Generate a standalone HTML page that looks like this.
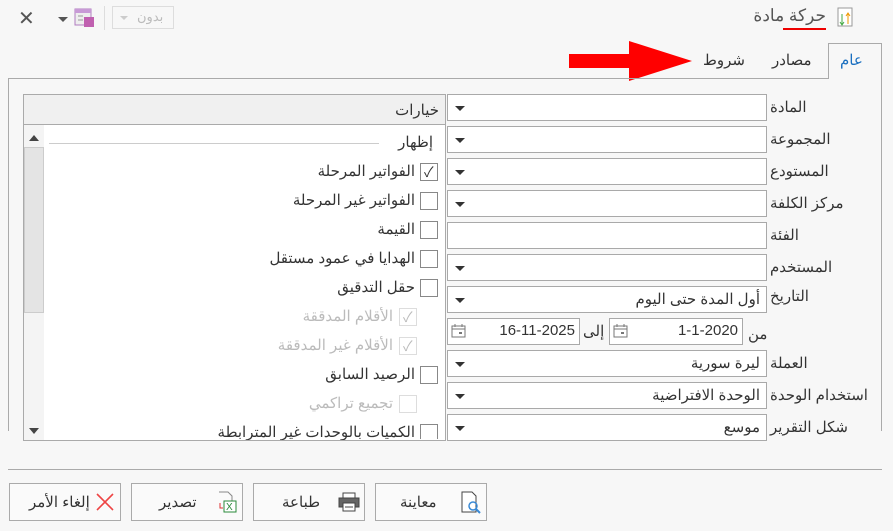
<!DOCTYPE html>
<html><head><meta charset="utf-8"><style>
*{box-sizing:border-box;margin:0;padding:0}
body{width:893px;height:531px;background:#f7f7f7;font-family:"Liberation Sans","Noto Sans CJK SC",sans-serif;font-size:14px;color:#333;position:relative;overflow:hidden}
.a{position:absolute}
.inp{position:absolute;left:447px;width:320px;height:27px;background:#fff;border:1px solid #a9a9a9}
.inp .dd{position:absolute;left:7px;top:11px;width:0;height:0;border-left:5px solid transparent;border-right:5px solid transparent;border-top:5px solid #333}
.inp .v{position:absolute;right:6px;top:3px;font-size:15px;color:#333}
.lbl{position:absolute;left:770px;font-size:15px;color:#333;direction:rtl}
.cb{position:absolute;width:18px;height:18px;border:1px solid #888;background:#fff}
.cb.d{border-color:#ddd}
.ct{position:absolute;direction:rtl;font-size:15px;white-space:nowrap}
.btn{position:absolute;top:483px;width:112px;height:38px;border:1px solid #aaa;background:#fafafa}
.btn span{position:absolute;top:9px;font-size:15px}
</style></head><body>
<!-- top bar -->
<div class="a" style="left:18px;top:6px;font-size:20px;color:#555">✕</div>
<div class="a" style="left:58px;top:17px;border-left:5px solid transparent;border-right:5px solid transparent;border-top:5px solid #555"></div>
<svg class="a" style="left:74px;top:8px" width="22" height="20"><rect x="1" y="1" width="16" height="16" fill="#eee" stroke="#b07cc0"/><rect x="1" y="1" width="16" height="4" fill="#c89ad6"/><rect x="10" y="9" width="10" height="10" fill="#c060b0"/><line x1="4" y1="8" x2="9" y2="8" stroke="#999"/><line x1="4" y1="12" x2="9" y2="12" stroke="#999"/></svg>
<div class="a" style="left:104px;top:6px;width:1px;height:24px;background:#ddd"></div>
<div class="a" style="left:112px;top:6px;width:62px;height:23px;border:1px solid #ddd;background:#f7f7f7"></div>
<div class="a" style="left:120px;top:16px;border-left:4px solid transparent;border-right:4px solid transparent;border-top:4px solid #ccc"></div>
<div class="a" style="left:137px;top:9px;color:#bbb;font-size:13px">بدون</div>
<div class="a" style="right:67px;top:6px;font-size:17px;color:#555;direction:rtl">حركة مادة</div>
<div class="a" style="left:783px;top:28px;width:43px;height:2px;background:#e00"></div>
<svg class="a" style="left:836px;top:6px" width="20" height="24"><rect x="2" y="2" width="14" height="18" fill="#fff" stroke="#999"/><path d="M6 8v10M4 16l2 3 2-3" stroke="#4a4" fill="none"/><path d="M12 18V8M10 10l2-3 2 3" stroke="#e90" fill="none"/></svg>
<!-- tabs -->
<div class="a" style="left:828px;top:43px;width:54px;height:36px;border:1px solid #aaa;border-bottom:none;background:#f7f7f7;z-index:2"></div>
<div class="a" style="left:840px;top:51px;color:#1a6fc0;font-size:15px;z-index:3">عام</div>
<div class="a" style="left:772px;top:51px;font-size:15px">مصادر</div>
<div class="a" style="left:703px;top:51px;font-size:15px">شروط</div>
<svg class="a" style="left:568px;top:40px" width="125" height="42"><path d="M1 14h60V1l63 20-63 20V28H1z" fill="#f00"/></svg>
<!-- panel -->
<div class="a" style="left:8px;top:78px;width:874px;height:353px;border:1px solid #aaa;border-bottom:none"></div>
<!-- fields -->
<div class="inp" style="top:94px"><i class="dd"></i></div><div class="lbl" style="top:98px">المادة</div>
<div class="inp" style="top:126px"><i class="dd"></i></div><div class="lbl" style="top:130px">المجموعة</div>
<div class="inp" style="top:158px"><i class="dd"></i></div><div class="lbl" style="top:162px">المستودع</div>
<div class="inp" style="top:190px"><i class="dd"></i></div><div class="lbl" style="top:194px">مركز الكلفة</div>
<div class="inp" style="top:222px"></div><div class="lbl" style="top:226px">الفئة</div>
<div class="inp" style="top:254px"><i class="dd"></i></div><div class="lbl" style="top:258px">المستخدم</div>
<div class="inp" style="top:286px"><i class="dd"></i><span class="v">أول المدة حتى اليوم</span></div><div class="lbl" style="top:287px">التاريخ</div>
<div class="inp" style="top:318px;left:609px;width:134px"><span class="v" style="right:4px">1-1-2020</span><svg class="a" style="left:3px;top:4px" width="16" height="16"><rect x="1" y="3" width="13" height="11" fill="none" stroke="#777"/><line x1="1" y1="6" x2="14" y2="6" stroke="#777"/><line x1="4" y1="1" x2="4" y2="4" stroke="#777"/><line x1="11" y1="1" x2="11" y2="4" stroke="#777"/><rect x="8" y="9" width="3" height="2" fill="#777"/></svg></div>
<div class="lbl" style="left:748px;top:325px">من</div>
<div class="a" style="left:583px;top:322px;font-size:15px">إلى</div>
<div class="inp" style="top:318px;width:133px"><span class="v" style="right:4px">16-11-2025</span><svg class="a" style="left:3px;top:4px" width="16" height="16"><rect x="1" y="3" width="13" height="11" fill="none" stroke="#777"/><line x1="1" y1="6" x2="14" y2="6" stroke="#777"/><line x1="4" y1="1" x2="4" y2="4" stroke="#777"/><line x1="11" y1="1" x2="11" y2="4" stroke="#777"/><rect x="8" y="9" width="3" height="2" fill="#777"/></svg></div>
<div class="inp" style="top:350px"><i class="dd"></i><span class="v">ليرة سورية</span></div><div class="lbl" style="top:354px">العملة</div>
<div class="inp" style="top:382px"><i class="dd"></i><span class="v">الوحدة الافتراضية</span></div><div class="lbl" style="top:386px">استخدام الوحدة</div>
<div class="inp" style="top:414px"><i class="dd"></i><span class="v">موسع</span></div><div class="lbl" style="top:418px">شكل التقرير</div>
<!-- options -->
<div class="a" style="left:23px;top:94px;width:423px;height:347px;border:1px solid #aaa;background:#fff;overflow:hidden">
<div class="a" style="left:0;top:0;width:421px;height:30px;background:#f0f0f0;border-bottom:1px solid #aaa"></div>
<div class="a" style="right:6px;top:6px;font-size:15px">خيارات</div>
<div class="a" style="left:0;top:30px;width:20px;height:317px;background:#f4f4f4"></div>
<div class="a" style="left:5px;top:40px;border-left:5px solid transparent;border-right:5px solid transparent;border-bottom:6px solid #444"></div>
<div class="a" style="left:0;top:52px;width:20px;height:166px;background:#e4e4e4;border:1px solid #ccc"></div>
<div class="a" style="left:5px;top:333px;border-left:5px solid transparent;border-right:5px solid transparent;border-top:6px solid #444"></div>
<div class="a" style="left:25px;top:48px;width:330px;height:1px;background:#ccc"></div>
<div class="a" style="right:12px;top:38px;font-size:15px">إظهار</div>
</div>
<div class="cb" style="left:420px;top:163px"></div><div class="a" style="left:424px;top:162px;font-size:14px">✓</div><div class="ct" style="right:478px;top:162px">الفواتير المرحلة</div>
<div class="cb" style="left:420px;top:192px"></div><div class="ct" style="right:478px;top:191px">الفواتير غير المرحلة</div>
<div class="cb" style="left:420px;top:221px"></div><div class="ct" style="right:478px;top:220px">القيمة</div>
<div class="cb" style="left:420px;top:250px"></div><div class="ct" style="right:478px;top:249px">الهدايا في عمود مستقل</div>
<div class="cb" style="left:420px;top:279px"></div><div class="ct" style="right:478px;top:278px">حقل التدقيق</div>
<div class="cb d" style="left:399px;top:308px"></div><div class="a" style="left:403px;top:307px;color:#bbb">✓</div><div class="ct" style="right:500px;top:307px;color:#bbb">الأقلام المدققة</div>
<div class="cb d" style="left:399px;top:337px"></div><div class="a" style="left:403px;top:336px;color:#bbb">✓</div><div class="ct" style="right:500px;top:336px;color:#bbb">الأقلام غير المدققة</div>
<div class="cb" style="left:420px;top:366px"></div><div class="ct" style="right:478px;top:365px">الرصيد السابق</div>
<div class="cb d" style="left:399px;top:395px"></div><div class="ct" style="right:500px;top:394px;color:#bbb">تجميع تراكمي</div>
<div class="cb" style="left:420px;top:424px;height:15px;border-bottom:none"></div><div class="ct" style="right:478px;top:423px;height:17px;overflow:hidden">الكميات بالوحدات غير المترابطة</div>
<!-- bottom -->
<div class="a" style="left:8px;top:469px;width:874px;height:1px;background:#aaa"></div>
<div class="btn" style="left:9px"><span style="left:19px">إلغاء الأمر</span><svg class="a" style="left:86px;top:9px" width="18" height="18"><path d="M1 1L17 17M17 1L1 17" stroke="#e44" stroke-width="1.6"/></svg></div>
<div class="btn" style="left:131px"><span style="left:27px">تصدير</span><svg class="a" style="left:84px;top:7px" width="22" height="22"><path d="M3 1h9l4 4v5" fill="none" stroke="#888"/><rect x="8" y="10" width="12" height="11" fill="#fff" stroke="#2a8a3a"/><text x="10" y="19" font-size="10" fill="#2a8a3a" font-family="Liberation Sans">X</text><path d="M4 12v5h3" stroke="#d33" fill="none"/></svg></div>
<div class="btn" style="left:253px"><span style="left:28px">طباعة</span><svg class="a" style="left:84px;top:8px" width="22" height="20"><rect x="5" y="1" width="12" height="5" fill="#fff" stroke="#444"/><rect x="1" y="6" width="20" height="9" fill="#666" stroke="#444"/><rect x="5" y="11" width="12" height="8" fill="#fff" stroke="#444"/><line x1="7" y1="15" x2="15" y2="15" stroke="#444"/></svg></div>
<div class="btn" style="left:375px"><span style="left:24px">معاينة</span><svg class="a" style="left:84px;top:7px" width="22" height="24"><path d="M2 1h10l4 4v16H2z" fill="#fff" stroke="#444"/><circle cx="13" cy="15" r="4" fill="none" stroke="#3a8ad6" stroke-width="1.5"/><line x1="16" y1="18" x2="20" y2="22" stroke="#3a8ad6" stroke-width="2"/></svg></div>
</body></html>
